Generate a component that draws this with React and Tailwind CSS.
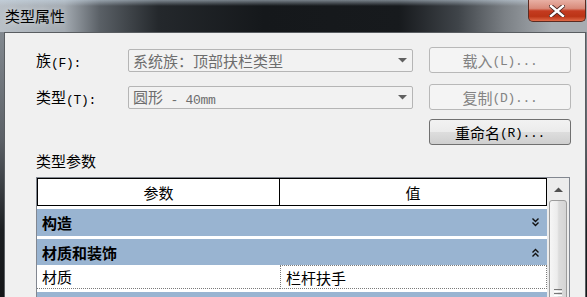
import React from "react";

const F = "font-['Noto_Sans_CJK_SC','Noto_Sans',sans-serif]";

function T({ text }) {
  const parts = text.match(/[\x20-\x7e]+|[^\x20-\x7e]+/g) || [];
  return (
    <>
      {parts.map((p, i) =>
        /^[\x20-\x7e]+$/.test(p) ? (
          <span key={i} className="relative top-[1px] font-['Liberation_Mono',monospace] text-[13px] tracking-[-0.3px] whitespace-pre">
            {p}
          </span>
        ) : (
          <span key={i}>{p}</span>
        )
      )}
    </>
  );
}

function Arrow({ color = "#5a5a5a" }) {
  return (
    <svg width="9" height="5" viewBox="0 0 9 5">
      <polygon points="0,0 9,0 4.5,4.5" fill={color} />
    </svg>
  );
}

function Chevron({ up }) {
  return (
    <svg width="7" height="9" viewBox="0 0 7 9" className={up ? "rotate-180" : ""}>
      <polyline points="0.5,0.5 3.5,3.5 6.5,0.5" fill="none" stroke="#111" strokeWidth="1.4" />
      <polyline points="0.5,4.5 3.5,7.5 6.5,4.5" fill="none" stroke="#111" strokeWidth="1.4" />
    </svg>
  );
}

function Combo({ text }) {
  return (
    <div className="w-[285px] h-[23px] border border-[#b5b5b5] rounded-[2px] bg-[#f2f2f2] flex items-center pl-[4px] pr-[5px]">
      <span className="flex-1 text-[15px] leading-none text-[#6d6d6d] whitespace-nowrap">
        <T text={text} />
      </span>
      <Arrow color="#606060" />
    </div>
  );
}

function DisabledBtn({ text }) {
  return (
    <div className="w-[142px] h-[26px] border border-[#b8b8b8] rounded-[3px] bg-[#f4f4f4] flex items-center justify-center text-[15px] leading-none text-[#838383]">
      <T text={text} />
    </div>
  );
}

function GroupRow({ title, up, h }) {
  return (
    <div className={`mt-[3px] ${h} bg-[#99b4d1] flex items-center pl-[5px] pr-[8px]`}>
      <span className="flex-1 text-[15px] font-bold leading-none text-black">{title}</span>
      <Chevron up={up} />
    </div>
  );
}

export default function App() {
  return (
    <div
      className={`w-[587px] h-[297px] overflow-hidden flex flex-col ${F} bg-[linear-gradient(to_bottom,#8e959c_0px,#5b6066_140px,#1c1f22_230px,#141618_297px)]`}
    >
      {/* title bar */}
      <div className="h-[32px] shrink-0 flex items-start bg-[linear-gradient(to_right,#b9c0c7_0%,#a3aab1_11%,#5a6066_17%,#24282c_27%,#15181b_45%,#171a1d_68%,#3f4449_78%,#7b8085_86%,#a7acb1_94%)] relative">
        <div className="absolute inset-x-0 top-0 h-[6px] bg-[linear-gradient(to_bottom,rgba(200,215,228,0.55),rgba(200,215,228,0))]" />
        <div className="relative pl-[5px] pt-[6px] text-[15px] leading-[20px] text-black [text-shadow:0_0_6px_rgba(255,255,255,0.6)]">
          类型属性
        </div>
        <div className="flex-1" />
        <div className="relative mr-[1px] w-[58px] h-[22px] rounded-b-[5px] border border-t-0 border-[#5a2b22] bg-[linear-gradient(to_bottom,#e8b0a4_0%,#d88a7a_40%,#c43b20_52%,#bb3416_78%,#e06a48_100%)] flex items-center justify-center">
          <svg width="16" height="12" viewBox="0 0 16 12">
            <path d="M2 1 L14 11 M14 1 L2 11" stroke="#4a2520" strokeWidth="4.2" strokeLinecap="square" />
            <path d="M2 1 L14 11 M14 1 L2 11" stroke="#ffffff" strokeWidth="2.4" strokeLinecap="square" />
          </svg>
        </div>
      </div>

      {/* body */}
      <div className="flex-1 ml-[4px] w-[582px] border border-b-0 border-[#595d61] bg-[#f0f0f0] flex flex-col pl-[31px]">
        <div className="mt-[14px] h-[26px] flex items-center">
          <div className="w-[92px] text-[15px] leading-none text-black whitespace-nowrap">
            <T text="族(F):" />
          </div>
          <Combo text="系统族：顶部扶栏类型" />
          <div className="ml-[16px]">
            <DisabledBtn text="载入(L)..." />
          </div>
        </div>
        <div className="mt-[11px] h-[26px] flex items-center">
          <div className="w-[92px] text-[15px] leading-none text-black whitespace-nowrap">
            <T text="类型(T):" />
          </div>
          <Combo text="圆形 - 40mm" />
          <div className="ml-[16px]">
            <DisabledBtn text="复制(D)..." />
          </div>
        </div>
        <div className="mt-[9px] flex">
          <div className="ml-[393px] w-[142px] h-[26px] border border-[#707070] rounded-[3px] bg-[linear-gradient(to_bottom,#f2f2f2_0%,#ebebeb_50%,#dddddd_51%,#cfcfcf_100%)] flex items-center justify-center text-[15px] leading-none text-black">
            <T text="重命名(R)..." />
          </div>
        </div>
        <div className="mt-[5px] h-[22px] text-[15px] leading-[22px] text-black">类型参数</div>

        {/* table */}
        <div className="mt-[5px] w-[534px] flex-1 border border-b-0 border-[#828790] flex">
          <div className="w-[510px] bg-white flex flex-col">
            <div className="h-[28px] border border-black flex text-[15px] leading-none text-black">
              <div className="w-[242px] border-r border-black flex items-center justify-center">参数</div>
              <div className="flex-1 flex items-center justify-center">值</div>
            </div>
            <GroupRow title="构造" h="h-[27px]" />
            <GroupRow title="材质和装饰" up h="h-[26px]" />
            <div className="h-[24px] flex text-[15px] leading-none text-black">
              <div className="w-[243px] border-b border-dotted border-[#7a7a7a] flex items-center pl-[5px]">材质</div>
              <div className="flex-1 border border-dotted border-[#7a7a7a] flex items-center pl-[5px]">栏杆扶手</div>
            </div>
            <GroupRow title="" h="h-[26px]" />
          </div>
          {/* scrollbar */}
          <div className="w-[22px] bg-[#ececec] flex flex-col">
            <div className="h-[22px] flex items-center justify-center">
              <svg width="9" height="5" viewBox="0 0 9 5">
                <polygon points="0,5 9,5 4.5,0.5" fill="#505050" />
              </svg>
            </div>
            <div className="ml-[2px] w-[18px] h-[180px] border border-[#9c9c9c] rounded-[3px] bg-[linear-gradient(to_right,#f6f6f6_0%,#ececec_45%,#dcdcdc_55%,#d4d4d4_100%)] flex flex-col items-center">
              <div className="mt-[88px] w-[8px] flex flex-col gap-[1px]">
                <div className="h-px bg-[#777]" />
                <div className="h-px bg-[#fff]" />
                <div className="h-px bg-[#777]" />
                <div className="h-px bg-[#fff]" />
                <div className="h-px bg-[#777]" />
              </div>
            </div>
          </div>
        </div>
      </div>
    </div>
  );
}
